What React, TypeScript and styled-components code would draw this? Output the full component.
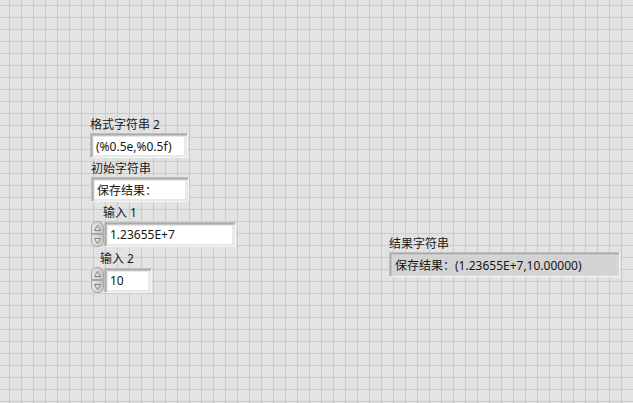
import styled, { createGlobalStyle } from 'styled-components';

const GlobalStyle = createGlobalStyle`
	html, body {
		margin: 0;
		padding: 0;
	}
	body {
		font-family: 'Noto Sans', 'Noto Sans CJK SC', sans-serif;
		font-size: 12px;
		color: #1c1c1c;
	}
`;

const Panel = styled.div`
	position: relative;
	width: 633px;
	height: 403px;
	overflow: hidden;
	background-color: #e3e3e3;
	background-image: linear-gradient(to right, #cbcbcb 1px, transparent 1px),
		linear-gradient(to bottom, #cbcbcb 1px, transparent 1px);
	background-size: 12px 12px;
	background-position: 9px 5px;
`;

// each control sits at its own spot on the front panel
const Control = styled.div<{ $x: number; $y: number }>`
	position: absolute;
	left: ${(p) => p.$x}px;
	top: ${(p) => p.$y}px;
	width: max-content;
	display: flex;
	flex-direction: column;
	align-items: flex-start;
`;

const Label = styled.div<{ $indent?: number }>`
	font-family: 'Noto Sans', 'Noto Sans CJK SC', sans-serif;
	font-size: 12px;
	line-height: 15px;
	height: 15px;
	margin-left: ${(p) => p.$indent || 0}px;
	margin-bottom: 1px;
	white-space: nowrap;
	color: #1a1a1a;
`;

const Frame = styled.div<{ $w: number; $indicator?: boolean }>`
	box-sizing: border-box;
	flex-shrink: 0;
	width: ${(p) => p.$w}px;
	min-width: ${(p) => p.$w}px;
	height: 25px;
	padding: 3px 3px 2px 3px;
	background: ${(p) => (p.$indicator ? '#d6d6d6' : '#e9e9e9')};
	border-top: 1px solid #c0c0c0;
	border-left: 1px solid #c0c0c0;
	border-right: 1px solid #f4f4f4;
	border-bottom: 1px solid #f4f4f4;
	box-shadow: inset 1px 1px 0 #aaaaaa, inset 2px 2px 0 #c4c4c4;
`;

const Field = styled.div<{ $indicator?: boolean }>`
	box-sizing: border-box;
	height: 100%;
	padding: 0 0 0 2px;
	display: flex;
	align-items: center;
	background: ${(p) => (p.$indicator ? '#d3d3d3' : '#ffffff')};
	font-family: 'Noto Sans', 'Noto Sans CJK SC', sans-serif;
	font-size: 12px;
	white-space: nowrap;
	color: #161616;
`;

const NumericRow = styled.div`
	display: flex;
	align-items: center;
`;

const Spinner = styled.div`
	display: flex;
	flex-direction: column;
	width: 13px;
	height: 26px;
`;

const SpinHalf = styled.div<{ $down?: boolean }>`
	flex: 1;
	display: flex;
	align-items: center;
	justify-content: center;
	background: linear-gradient(to right, #e6e6e6, #c2c2c2);
	border: 1px solid #a6a6a6;
	border-radius: ${(p) => (p.$down ? '0 0 6px 6px' : '6px 6px 0 0')};
	box-sizing: border-box;
`;

const Arrow = ({ down }: { down?: boolean }) => (
	<svg width='7' height='6' viewBox='0 0 7 6'>
		<path
			d={down ? 'M0.5 0.5 L6.5 0.5 L3.5 5.5 Z' : 'M0.5 5.5 L6.5 5.5 L3.5 0.5 Z'}
			fill='#e2e2e2'
			stroke='#7a7a7a'
			strokeWidth='0.9'
		/>
	</svg>
);

const NumericControl = (props: { x: number; y: number; label: string; indent: number; w: number; value: string }) => (
	<Control $x={props.x} $y={props.y}>
		<Label $indent={props.indent}>{props.label}</Label>
		<NumericRow>
			<Spinner>
				<SpinHalf>
					<Arrow />
				</SpinHalf>
				<SpinHalf $down>
					<Arrow down />
				</SpinHalf>
			</Spinner>
			<Frame $w={props.w}>
				<Field>{props.value}</Field>
			</Frame>
		</NumericRow>
	</Control>
);

const App = () => {
	return (
		<>
			<GlobalStyle />
			<Panel>
				<Control $x={90} $y={117}>
					<Label>格式字符串 2</Label>
					<Frame $w={98}>
						<Field>(%0.5e,%0.5f)</Field>
					</Frame>
				</Control>
				<Control $x={91} $y={161}>
					<Label>初始字符串</Label>
					<Frame $w={98}>
						<Field>保存结果：</Field>
					</Frame>
				</Control>
				<NumericControl x={91} y={205} label='输入 1' indent={12} w={132} value='1.23655E+7' />
				<NumericControl x={91} y={251} label='输入 2' indent={9} w={48} value='10' />
				<Control $x={389} $y={236}>
					<Label>结果字符串</Label>
					<Frame $w={231} $indicator>
						<Field $indicator>保存结果：(1.23655E+7,10.00000)</Field>
					</Frame>
				</Control>
			</Panel>
		</>
	);
};

export default App;
